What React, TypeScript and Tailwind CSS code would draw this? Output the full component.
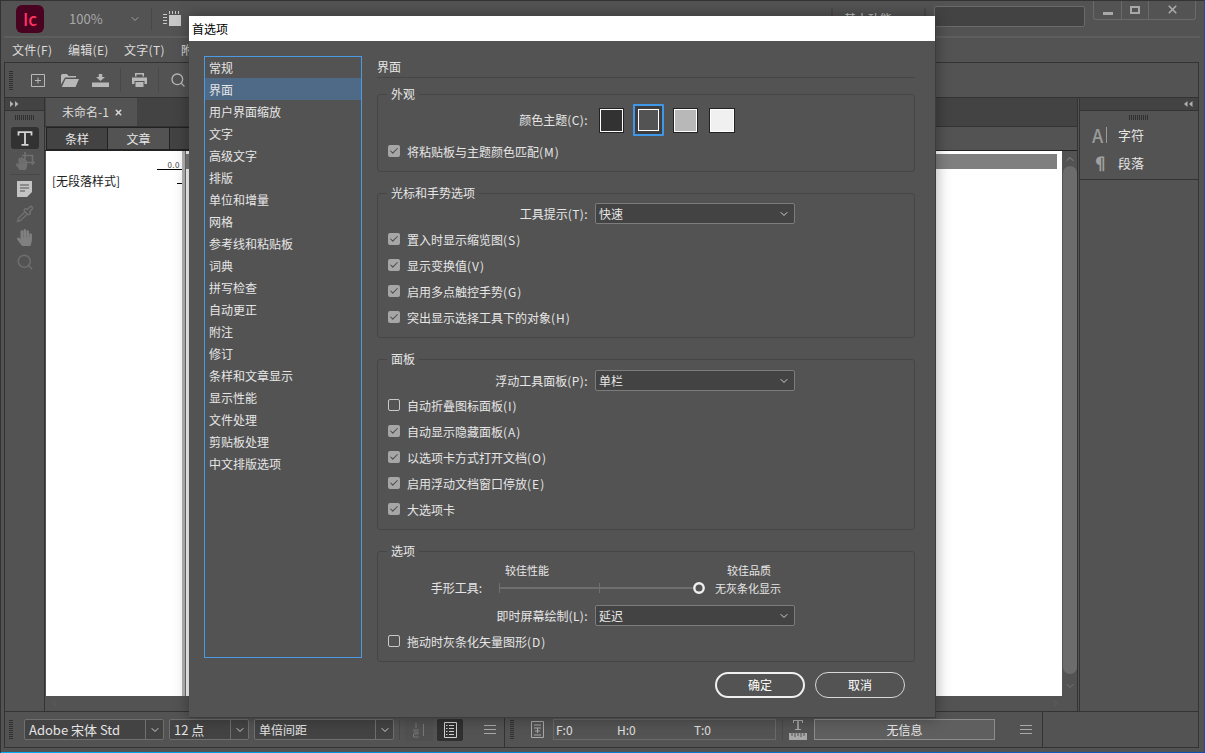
import { ChevronDown, ChevronLeft, ChevronRight, ChevronUp, Check, Pipette, Search, X } from "lucide-react";
import { FaHandPaper } from "react-icons/fa";

const categories = [
  "常规", "界面", "用户界面缩放", "文字", "高级文字", "排版", "单位和增量", "网格", "参考线和粘贴板", "词典",
  "拼写检查", "自动更正", "附注", "修订", "条样和文章显示", "显示性能", "文件处理", "剪贴板处理", "中文排版选项",
];

function Grip({ vertical }: { vertical?: boolean }) {
  if (vertical) {
    return <div className="w-[4px] h-[19px] bg-[repeating-linear-gradient(to_bottom,#303030_0,#303030_1px,transparent_1px,transparent_2px)]" />;
  }
  return <div className="w-[20px] h-[5px] bg-[repeating-linear-gradient(to_right,#303030_0,#303030_1px,transparent_1px,transparent_2px)]" />;
}

function MenuLines() {
  return (
    <svg width="12" height="9" viewBox="0 0 12 9" className="text-[#a8a8a8]">
      <path d="M0 .5h12M0 4.5h12M0 8.5h12" stroke="currentColor" />
    </svg>
  );
}

function Checkbox({ checked }: { checked: boolean }) {
  if (checked) {
    return (
      <span className="w-[12px] h-[12px] rounded-[2px] bg-[#a6a6a6] flex items-center justify-center shrink-0 -mt-[2px]">
        <Check size={10} strokeWidth={2.5} className="text-[#4c4c4c]" />
      </span>
    );
  }
  return <span className="w-[12px] h-[12px] rounded-[2px] border border-[#c8c8c8] shrink-0 -mt-[2px]" />;
}

// the latin part of a label runs wider than the CJK font gives it
function Label({ text, tracking }: { text: string; tracking: string }) {
  const i = text.indexOf("(");
  if (i < 0) return <>{text}</>;
  return (
    <>
      {text.slice(0, i)}
      <span className={tracking}>{text.slice(i)}</span>
    </>
  );
}

function CheckRow({ label, checked = true }: { label: string; checked?: boolean }) {
  return (
    <div className="h-[26px] flex items-center pl-[10px] gap-[7px]">
      <Checkbox checked={checked} />
      <span>
        <Label text={label} tracking="tracking-[1px]" />
      </span>
    </div>
  );
}

function SelectRow({ label, value }: { label: string; value: string }) {
  return (
    <div className="h-[21px] flex items-center gap-[6px]">
      <span className="w-[211px] text-right pr-[1px]">
        <Label text={label} tracking="tracking-[0.4px]" />
      </span>
      <div className="w-[200px] h-[21px] bg-[#434343] border border-[#7c7c7c] rounded-[2px] flex items-center justify-between pl-[3px] pr-[4px]">
        <span>{value}</span>
        <ChevronDown size={12} className="text-[#d0d0d0]" />
      </div>
    </div>
  );
}

function Group({ title, className, children }: { title: string; className: string; children: React.ReactNode }) {
  return (
    <div className={"relative border border-[#464646] rounded-[3px] " + className}>
      <span className="absolute left-[9px] top-[-9px] bg-[#535353] px-[4px] leading-[16px]">{title}</span>
      {children}
    </div>
  );
}

function Combo({ value, className }: { value: string; className: string }) {
  return (
    <div className={"h-[21px] bg-[#434343] border border-[#6f6f6f] rounded-[2px] flex items-center text-[#e4e4e4] " + className}>
      <span className="flex-1 pl-[4px] truncate">{value}</span>
      <span className="w-[18px] h-full border-l border-[#6f6f6f] flex items-center justify-center">
        <ChevronDown size={12} className="text-[#cfcfcf]" />
      </span>
    </div>
  );
}

function Swatch({ color, className }: { color: string; className: string }) {
  return <span className={"h-[25px] border border-[#222] shadow-[inset_0_0_0_1px_#fff] " + color + " " + className} />;
}

function Dialog() {
  return (
    <div className="absolute left-[188px] top-[15px] w-[747px] h-[702px] bg-[#535353] shadow-[0_0_14px_rgba(0,0,0,0.35)] border-r border-b border-[#3c3c3c] text-xs text-[#e6e6e6]">
      <div className="h-[25px] bg-white text-black pl-[3px] flex items-center">首选项</div>
      <div className="flex pl-[15px] pt-[15px] gap-[15px]">
        <div className="w-[158px] h-[602px] border border-[#4a9be4]">
          <div className="-mt-[1px]">
            {categories.map((c) => (
              <div key={c} className={"h-[22px] flex items-center pl-[4px] pt-[1px] " + (c === "界面" ? "bg-[#4e6a87]" : "")}>
                {c}
              </div>
            ))}
          </div>
        </div>
        <div className="w-[538px]">
          <div className="h-[22px] border-b border-[#464646] leading-[21px]">界面</div>
          <div className="flex flex-col gap-[21px] mt-[16px]">
            <Group title="外观" className="h-[78px] pt-[9px]">
              <div className="h-[32px] flex items-center">
                <span className="w-[211px] text-right pr-[1px]">
                  <Label text="颜色主题(C):" tracking="tracking-[0.4px]" />
                </span>
                <div className="flex items-center ml-[10px]">
                  <Swatch color="bg-[#323232]" className="w-[25px]" />
                  <span className="ml-[9px] p-[2px] bg-[#3f97e8] rounded-[1px]">
                    <span className="block w-[27px] h-[28px] bg-[#535353] border-[3px] border-[#3d3d3d]">
                      <span className="block w-full h-full border border-white bg-[#535353]" />
                    </span>
                  </span>
                  <Swatch color="bg-[#b8b8b8]" className="ml-[9px] w-[25px]" />
                  <Swatch color="bg-[#f0f0f0]" className="ml-[11px] w-[26px]" />
                </div>
              </div>
              <div className="mt-[3px]">
                <CheckRow label="将粘贴板与主题颜色匹配(M)" />
              </div>
            </Group>
            <Group title="光标和手势选项" className="h-[145px] pt-[9px]">
              <SelectRow label="工具提示(T):" value="快速" />
              <div className="mt-[3px]">
                <CheckRow label="置入时显示缩览图(S)" />
                <CheckRow label="显示变换值(V)" />
                <CheckRow label="启用多点触控手势(G)" />
                <CheckRow label="突出显示选择工具下的对象(H)" />
              </div>
            </Group>
            <Group title="面板" className="h-[171px] pt-[10px]">
              <SelectRow label="浮动工具面板(P):" value="单栏" />
              <div className="mt-[2px]">
                <CheckRow label="自动折叠图标面板(I)" checked={false} />
                <CheckRow label="自动显示隐藏面板(A)" />
                <CheckRow label="以选项卡方式打开文档(O)" />
                <CheckRow label="启用浮动文档窗口停放(E)" />
                <CheckRow label="大选项卡" />
              </div>
            </Group>
            <Group title="选项" className="h-[111px] pt-[10px]">
              <div className="h-[16px] flex items-center text-[11px]">
                <span className="ml-[127px] w-[44px] whitespace-nowrap">较佳性能</span>
                <span className="ml-[178px] w-[44px] whitespace-nowrap">较佳品质</span>
              </div>
              <div className="h-[20px] flex items-center">
                <span className="w-[104px] text-right">手形工具:</span>
                <svg width="208" height="14" viewBox="0 0 208 14" className="ml-[17px] shrink-0">
                  <path d="M0 7h194" stroke="#6e6e6e" strokeWidth="2" />
                  <path d="M.5 2v10M100.5 2v10" stroke="#6e6e6e" />
                  <circle cx="200" cy="7" r="4.700" fill="#535353" stroke="#f0f0f0" strokeWidth="2.400" />
                </svg>
                <span className="ml-[8px] text-[11px] whitespace-nowrap">无灰条化显示</span>
              </div>
              <div className="mt-[7px]">
                <SelectRow label="即时屏幕绘制(L):" value="延迟" />
              </div>
              <div className="mt-[3px]">
                <CheckRow label="拖动时灰条化矢量图形(D)" checked={false} />
              </div>
            </Group>
          </div>
          <div className="flex justify-end gap-[10px] mt-[10px] pr-[10px]">
            <button className="w-[90px] h-[26px] rounded-full border-2 border-[#f0f0f0] text-white">确定</button>
            <button className="w-[90px] h-[26px] rounded-full border border-[#d8d8d8] text-white">取消</button>
          </div>
        </div>
      </div>
    </div>
  );
}

function LeftTools() {
  return (
    <div className="w-[41px] shrink-0 border-r border-[#333] border-l flex flex-col items-center">
      <div className="w-full h-[13px] bg-[#434343] border-b border-[#333] flex items-center pl-[5px] text-[#b0b0b0]">
        <svg width="9" height="6" viewBox="0 0 9 6" fill="currentColor">
          <path d="M0 0l3.500 3L0 6zM5 0l3.500 3L5 6z" />
        </svg>
      </div>
      <div className="mt-[4px]"><Grip /></div>
      <div className="mt-[7px] w-[28px] h-[22px] bg-[#323232] rounded-[3px] flex items-center justify-center text-[#d4d4d4]">
        <svg width="16" height="15" viewBox="0 0 16 15" fill="none" stroke="currentColor" strokeWidth="1.800">
          <path d="M1.500 4.500V1.200h13v3.300M8 1.200v12.600M4.500 13.800h7" />
        </svg>
      </div>
      <div className="mt-[3px] w-[20px] h-[18px] relative text-[#707070]">
        <FaHandPaper size={13} className="absolute left-0 bottom-0" />
        <svg width="13" height="14" viewBox="0 0 13 14" fill="none" stroke="currentColor" strokeWidth="1.600" className="absolute right-0 top-0">
          <path d="M0 3.500h10.500V13M3 0v10.500h10" />
        </svg>
      </div>
      <div className="mt-[4px] w-[30px] border-t border-[#484848]" />
      <svg width="15" height="16" viewBox="0 0 15 16" className="mt-[6px]">
        <path d="M0 0h15v11l-5 5H0z" fill="#c4c4c4" />
        <path d="M3 4h9M3 7h9M3 10h5" stroke="#535353" strokeWidth="1.200" />
      </svg>
      <Pipette size={18} className="mt-[8px] text-[#707070]" />
      <FaHandPaper size={17} className="mt-[6px] text-[#808080]" />
      <Search size={18} className="mt-[7px] text-[#6e6e6e]" />
    </div>
  );
}

function DocArea() {
  return (
    <div className="flex-1 flex flex-col min-w-0 border-r border-[#333]">
      <div className="h-[29px] bg-[#434343] border-b border-[#333] flex pl-[1px]">
        <div className="w-[91px] bg-[#535353] flex items-center pl-[16px] gap-[5px] text-xs text-[#dcdcdc]">
          <span>未命名-1</span>
          <X size={9} strokeWidth={4} className="text-[#d8d8d8]" />
        </div>
      </div>
      <div className="h-[24px] flex items-stretch text-xs text-[#e6e6e6] border-b border-[#222]">
        <div className="w-[62px] bg-[#434343] border border-[#222] ml-[1px] flex items-center justify-center">条样</div>
        <div className="w-[62px] bg-[#535353] border-y border-r border-[#222] flex items-center justify-center">文章</div>
        <div className="w-[62px] bg-[#434343] border-y border-r border-[#222]" />
      </div>
      <div className="flex-1 flex min-h-0">
        <div className="w-[136px] ml-[1px] bg-white relative shrink-0 text-xs text-[#222]">
          <div className="absolute right-0 top-[9px] w-[25px] border-b border-black text-right pr-[2px] text-[8px] leading-[9px] tracking-[0.5px] text-[#444]">0.0</div>
          <div className="absolute right-0 top-[32px] w-[5px] border-b border-black" />
          <div className="pl-[6px] pt-[22px]">[无段落样式]</div>
        </div>
        <div className="w-[3px] bg-[#b5b5b5] shrink-0" />
        <div className="flex-1 bg-white pr-[5px] pt-[3px] min-w-0 border-l border-[#6a6a6a]">
          <div className="h-[15px] bg-[#7f7f7f]" />
        </div>
        <div className="w-[15px] shrink-0 flex flex-col items-center text-[#8a8a8a]">
          <ChevronUp size={12} className="mt-[2px]" />
          <div className="w-[14px] mt-[1px] h-[508px] rounded-full bg-[#6c6c6c]" />
          <ChevronDown size={12} className="mt-[6px] text-[#777]" />
        </div>
      </div>
      <div className="h-[15px] flex items-center justify-between pl-[4px] pr-[16px] text-[#606060]">
        <ChevronLeft size={11} />
        <ChevronRight size={11} />
      </div>
    </div>
  );
}

function RightPanel() {
  return (
    <div className="w-[120px] shrink-0 border-r border-[#333] flex flex-col ml-[1px] border-l">
      <div className="h-[13px] bg-[#434343] border-b border-[#333] flex items-center justify-end pr-[5px] text-[#b0b0b0]">
        <svg width="9" height="6" viewBox="0 0 9 6" fill="currentColor">
          <path d="M3.500 0L0 3l3.500 3zM8.500 0L5 3l3.500 3z" />
        </svg>
      </div>
      <div className="h-[69px] border-b border-[#333] flex flex-col items-center">
        <div className="mt-[4px]"><Grip /></div>
        <div className="w-full text-[13px] text-[#e6e6e6] mt-[1px]">
          <div className="h-[28px] flex items-center pl-[12px] gap-[11px]">
            <span className="flex items-center text-[#9a9a9a] text-[18px] font-medium w-[15px] border-r border-[#9a9a9a] h-[16px] leading-[16px]">A</span>
            <span>字符</span>
          </div>
          <div className="h-[28px] flex items-center pl-[12px] gap-[11px]">
            <span className="text-[#a0a0a0] text-[17px] font-semibold w-[15px] leading-[16px]">¶</span>
            <span>段落</span>
          </div>
        </div>
      </div>
    </div>
  );
}

function BottomBar() {
  return (
    <div className="h-[37px] ml-[3px] mr-[5px] border border-[#333] flex items-center text-xs text-[#e4e4e4] shrink-0">
      <div className="ml-[4px]"><Grip vertical /></div>
      <div className="ml-[11px]"><Combo value="Adobe 宋体 Std" className="w-[140px] text-[13px]" /></div>
      <div className="ml-[5px]"><Combo value="12 点" className="w-[80px] text-[13px]" /></div>
      <div className="ml-[5px]"><Combo value="单倍间距" className="w-[140px] text-xs" /></div>
      <div className="ml-[5px] h-[20px] border-l border-[#484848]" />
      <div className="ml-[5px] w-[28px] h-[22px] bg-[#505050] flex items-center justify-center text-[#777]">
        <svg width="14" height="16" viewBox="0 0 14 16" fill="none" stroke="currentColor">
          <path d="M4 1v5M1 8h6M1.500 10h4.500v2h-4.500v3h5M11.500 2v12" />
        </svg>
      </div>
      <div className="ml-[4px] w-[26px] h-[22px] bg-[#303030] rounded-[2px] flex items-center justify-center">
        <svg width="13" height="16" viewBox="0 0 13 16" fill="none" stroke="#d0d0d0">
          <path d="M.5.5h12v15H.5zM5 3.500h5M5 6.500h5M5 9.500h5M5 12.500h5M2 3.500h1.500M2 6.500h1.500M2 9.500h1.500M2 12.500h1.500" />
        </svg>
      </div>
      <div className="ml-[21px]"><MenuLines /></div>
      <div className="ml-[8px] h-[35px] border-l border-[#333]" />
      <div className="ml-[5px]"><Grip vertical /></div>
      <svg width="13" height="17" viewBox="0 0 13 17" fill="none" stroke="#a8a8a8" className="ml-[17px] shrink-0">
        <path d="M.5.5h12v16H.5zM3 4h7M3 7h7M6.500 7v5M4 10h5M3 14h7" />
      </svg>
      <div className="ml-[9px] w-[223px] h-[21px] border border-[#6a6a6a] flex items-center text-xs text-[#e0e0e0] pl-[2px]">
        <span className="w-[61px]">F:0</span>
        <span className="w-[77px]">H:0</span>
        <span>T:0</span>
      </div>
      <div className="ml-[6px] h-[20px] border-l border-[#484848]" />
      <svg width="18" height="21" viewBox="0 0 18 21" fill="#a8a8a8" className="ml-[6px] shrink-0">
        <path d="M4 1h10v3h-1V2H9.800v8H12v1H6v-1h2.200V2H5v2H4z" />
        <path d="M0 14h18v7H0z" />
        <path d="M3 14v3M6 14v4M9 14v3M12 14v4M15 14v3" stroke="#535353" />
      </svg>
      <div className="ml-[7px] w-[181px] h-[21px] bg-[#5f5f5f] border border-[#8c8c8c] flex items-center justify-center text-xs text-[#e8e8e8]">无信息</div>
      <div className="ml-[25px]"><MenuLines /></div>
      <div className="ml-[10px] h-[35px] border-l border-[#333]" />
    </div>
  );
}

export default function App() {
  return (
    <div className="relative w-[1205px] h-[753px] overflow-hidden bg-[#535353] font-['Noto_Sans_CJK_SC','Noto_Sans',sans-serif] flex flex-col border-t border-l border-[#333] border-r border-r-[#0f4fb0]">
      {/* title bar */}
      <div className="h-[37px] flex items-center relative shrink-0 border-b-[2px] border-[#5e5e5e] ml-[3px] mr-[4px]">
        <div className="ml-[12px] w-[28px] h-[28px] rounded-[6px] bg-[#49021f] flex items-center justify-center text-[#ff3366] text-[17px] font-medium leading-none">Ic</div>
        <span className="ml-[25px] text-[13px] text-[#a8a8a8]">100%</span>
        <ChevronDown size={12} className="ml-[26px] text-[#a0a0a0]" />
        <div className="ml-[10px] h-[22px] border-l border-[#484848]" />
        <svg width="18" height="15" viewBox="0 0 18 15" className="ml-[11px] text-[#c8c8c8]" fill="currentColor">
          <path d="M6 4h12v11H6zM0 3h4v1H0zM0 6h4v1H0zM0 9h4v1H0zM0 12h4v1H0zM6 0h1v3H6zM9 0h1v3H9zM12 0h1v3h-1zM15 0h1v3h-1z" />
        </svg>
        <div className="flex-1" />
        <div className="h-[16px] border-l-[2px] border-[#484848] mb-[6px]" />
        <span className="ml-[11px] w-[80px] text-xs text-[#c8c8c8]">基本功能</span>
        <div className="h-[16px] border-l-[2px] border-[#484848] mb-[6px]" />
        <div className="ml-[8px] w-[151px] h-[21px] mb-[4px] bg-[#434343] border border-[#6a6a6a] rounded-[2px]" />
        <div className="ml-[8px] mr-[4px] mb-[17px] w-[103px] h-[20px] border border-t-0 border-[#6a6a6a] rounded-b-[3px] flex items-center text-[#a8a8a8]">
          <div className="w-[28px] h-full border-r border-[#6a6a6a] flex items-center justify-center pt-[7px]">
            <div className="w-[10px] h-[3px] bg-[#a8a8a8]" />
          </div>
          <div className="w-[27px] h-full border-r border-[#6a6a6a] flex items-center justify-center">
            <div className="w-[10px] h-[8px] border-2 border-[#a8a8a8]" />
          </div>
          <div className="flex-1 flex items-center justify-center">
            <X size={13} strokeWidth={3.200} />
          </div>
        </div>
      </div>

      {/* menu bar */}
      <div className="h-[24px] pl-[11px] flex items-center text-xs text-[#dcdcdc] shrink-0">
        <span className="w-[56px] tracking-[0.3px]">文件(F)</span>
        <span className="w-[56px] tracking-[0.3px]">编辑(E)</span>
        <span className="w-[57px] tracking-[0.3px]">文字(T)</span>
        <span>附注(N)</span>
      </div>

      {/* control panel */}
      <div className="h-[36px] ml-[3px] mr-[5px] border border-[#333] flex items-center shrink-0 text-[#b8b8b8]">
        <div className="ml-[4px]"><Grip vertical /></div>
        <svg width="14" height="13" viewBox="0 0 14 13" fill="none" stroke="currentColor" className="ml-[18px]">
          <path d="M.5.5h13v12H.5zM7 3.500v6M4 6.500h6" />
        </svg>
        <svg width="18" height="13" viewBox="0 0 18 13" fill="currentColor" className="ml-[16px]">
          <path d="M0 1.200 L1 0h5l1.500 2H15v1.500H4L0 10.500z" />
          <path d="M4.500 5H18l-3.500 8H.8z" />
        </svg>
        <svg width="17" height="13" viewBox="0 0 17 13" fill="currentColor" className="ml-[13px]">
          <path d="M6.800 0h3.400v3H13L8.500 7 4 3h2.800zM0 8.500h17V13H0z" />
        </svg>
        <div className="ml-[11px] h-[24px] border-l border-[#484848]" />
        <svg width="15" height="14" viewBox="0 0 15 14" fill="currentColor" className="ml-[11px]">
          <path d="M3 0h9v3.500h-1.500V1.500h-6v2H3zM0 4.500h15V11h-2.500V8h-10v3H0z" />
          <path d="M3.500 9h8v5h-8z" />
        </svg>
        <div className="ml-[11px] h-[24px] border-l border-[#484848]" />
        <Search size={16} className="ml-[11px]" />
      </div>

      {/* workspace */}
      <div className="flex-1 min-h-0 flex ml-[3px] mr-[5px]">
        <LeftTools />
        <DocArea />
        <RightPanel />
      </div>

      <BottomBar />
      <div className="h-[4px] shrink-0" />
      <div className="h-[1px] shrink-0 bg-gradient-to-r from-[#00b0f8] to-[#0f4fb0]" />
      <Dialog />
    </div>
  );
}
